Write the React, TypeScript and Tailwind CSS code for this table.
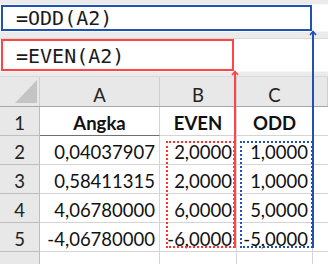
import React from 'react';

const ROWS = [
  ['0,04037907', '2,0000', '1,0000'],
  ['0,58411315', '2,0000', '1,0000'],
  ['4,06780000', '6,0000', '5,0000'],
  ['-4,06780000', '-6,0000', '-5,0000'],
];

const cols = 'grid grid-cols-[40px_120px_77px_76px_1fr]';

// small upward chevron used as arrow tip
const ArrowTip: React.FC<{ color: string; className: string }> = ({ color, className }) => (
  <svg width="8" height="6" viewBox="0 0 8 6" className={`absolute ${className}`}>
    <path d="M1 5 L4 1.5 L7 5" fill="none" stroke={color} strokeWidth="1.6" />
  </svg>
);

const App: React.FC = () => {
  return (
    <div className="relative w-[328px] h-[264px] overflow-hidden bg-white font-['Lato',sans-serif] text-[#111]">
      {/* formula bars */}
      <div className="h-[5px] bg-[#ebebeb] border-b border-[#f8f8f8]" />
      <div className="h-[26px] bg-white">
        <div className="ml-[1px] w-[311px] h-full border-2 border-[#1f52b3] pl-[13px] flex items-center font-['DejaVu_Sans_Mono',monospace] text-[20px] leading-none text-[#1a1a1a]">
          =ODD(A2)
        </div>
      </div>
      <div className="h-[8px] bg-[#ebebeb] border-t border-[#f6f6f6] border-b border-b-[#d9d9d9]" />
      <div className="h-[32px] bg-white">
        <div className="ml-[1px] w-[233px] h-full border-2 border-[#ff4545] pl-[13px] pt-[2px] flex items-center font-['DejaVu_Sans_Mono',monospace] text-[20px] leading-none text-[#1a1a1a]">
          =EVEN(A2)
        </div>
      </div>
      <div className="h-[6px] bg-[#ebebeb] border-t border-[#f6f6f6] border-b border-b-[#d9d9d9]" />

      {/* sheet */}
      <div className="text-[18.5px] leading-none">
        <div className={`${cols} h-[30px] bg-[#e8e8e8] border-b border-[#a8a8a8]`}>
          <div className="relative border-r border-[#cfcfcf]">
            <svg width="22" height="23" viewBox="0 0 22 23" className="absolute left-[15px] top-[3px]">
              <path d="M22 0 L22 23 L0 23 Z" fill="#c4c4c4" />
            </svg>
          </div>
          {['A', 'B', 'C', ''].map((h, i) => (
            <div key={i} className="flex items-end justify-center pb-[2px] border-r border-[#cfcfcf] text-[#222]">
              {h}
            </div>
          ))}
        </div>

        <div className={`${cols} h-[29px]`}>
          <div className="flex items-end justify-center pb-[3px] bg-[#e8e8e8] border-r border-b border-[#bdbdbd] text-[#222]">1</div>
          <div className="flex items-end justify-center pb-[3px] font-bold border-r border-[#d4d4d4] border-b border-b-[#6f6f6f]">Angka</div>
          <div className="flex items-end justify-center pb-[3px] font-bold border-r border-b border-[#d4d4d4]">EVEN</div>
          <div className="flex items-end justify-center pb-[3px] font-bold border-r border-b border-[#d4d4d4]">ODD</div>
          <div className="border-b border-[#d4d4d4]" />
        </div>

        {ROWS.map((r, i) => (
          <div key={i} className={`${cols} h-[29px]`}>
            <div className="flex items-end justify-center pb-[3px] bg-[#e8e8e8] border-r border-b border-[#bdbdbd] text-[#222]">
              {i + 2}
            </div>
            {r.map((v, j) => (
              <div key={j} className="flex items-end justify-end pr-[4px] pb-[3px] border-r border-b border-[#d4d4d4]">
                {v}
              </div>
            ))}
            <div className="border-b border-[#d4d4d4]" />
          </div>
        ))}

        <div className={`${cols} h-[29px]`}>
          <div className="bg-[#e8e8e8] border-r border-[#bdbdbd]" />
          <div className="border-r border-[#d4d4d4]" />
          <div className="border-r border-[#d4d4d4]" />
          <div className="border-r border-[#d4d4d4]" />
          <div />
        </div>
      </div>

      {/* copy marquees */}
      <div className="absolute left-[166px] top-[141px] w-[69px] h-[107px] border-2 border-dotted border-[#ff3030]" />
      <div className="absolute left-[240px] top-[141px] w-[73px] h-[107px] border-2 border-dotted border-[#1f52b3]" />

      {/* leader lines from the formula bars */}
      <div className="absolute left-[234px] top-[72px] w-[2px] h-[176px] bg-[#ff4545]" />
      <ArrowTip color="#ff4545" className="left-[231px] top-[70px]" />
      <div className="absolute left-[312px] top-[32px] w-[2px] h-[216px] bg-[#1f52b3]" />
      <ArrowTip color="#1f52b3" className="left-[309px] top-[30px]" />
    </div>
  );
};

export default App;
